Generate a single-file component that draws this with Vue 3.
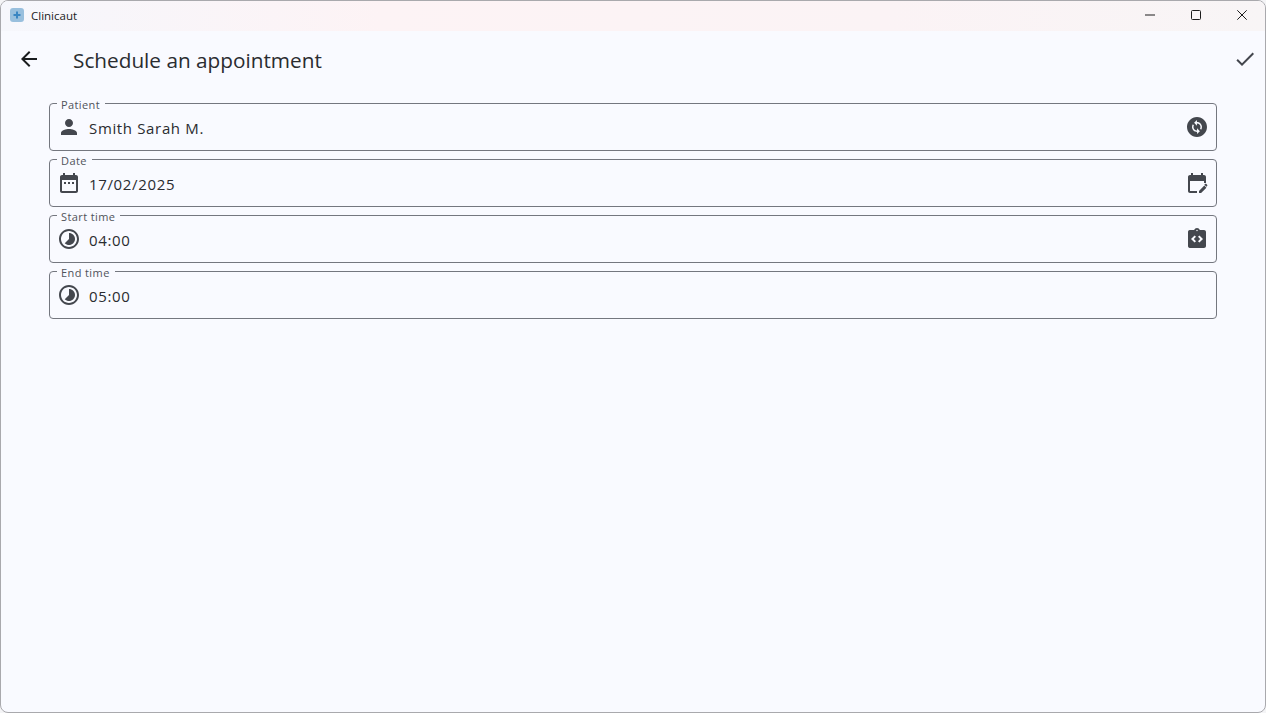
<script setup>
const icons = {
  person: "M12 12c2.21 0 4-1.79 4-4s-1.79-4-4-4-4 1.79-4 4 1.79 4 4 4zm0 2c-2.67 0-8 1.34-8 4v2h16v-2c0-2.66-5.33-4-8-4z",
  calendar: "M9 11H7v2h2v-2zm4 0h-2v2h2v-2zm4 0h-2v2h2v-2zm2-7h-1V2h-2v2H8V2H6v2H5c-1.11 0-1.99.9-1.99 2L3 20c0 1.1.89 2 2 2h14c1.1 0 2-.9 2-2V6c0-1.1-.9-2-2-2zm0 16H5V9h14v11z",
  timelapse: "M16.24 7.76C15.07 6.59 13.54 6 12 6v6l-4.24 4.24c2.34 2.34 6.14 2.34 8.49 0 2.34-2.34 2.34-6.14-.01-8.48zM12 2C6.48 2 2 6.48 2 12s4.48 10 10 10 10-4.48 10-10S17.52 2 12 2zm0 18c-4.42 0-8-3.58-8-8s3.58-8 8-8 8 3.58 8 8-3.58 8-8 8z",
  change: "M12 2C6.48 2 2 6.48 2 12s4.48 10 10 10 10-4.48 10-10S17.52 2 12 2zm.06 17v-2.01H12c-1.28 0-2.56-.49-3.54-1.46-1.71-1.71-1.92-4.35-.64-6.29l1.1 1.1c-.71 1.33-.53 3.01.59 4.13.7.7 1.62 1.03 2.54 1.01v-2.14l2.83 2.83L12.06 19zm4.11-4.24l-1.1-1.1c.71-1.33.53-3.01-.59-4.13C13.79 8.84 12.9 8.5 12 8.5h-.06v2.15L9.11 7.83 11.94 5v2.02c1.3-.02 2.61.45 3.6 1.45 1.7 1.7 1.91 4.34.63 6.29z",
  editCalendar: "M5 10h14v2h2V6c0-1.1-.9-2-2-2h-1V2h-2v2H8V2H6v2H5c-1.11 0-1.99.9-1.99 2L3 20c0 1.1.89 2 2 2h7v-2H5V10zm17.13 3.71-.71-.71c-.39-.39-1.02-.39-1.41 0l-.71.71 2.12 2.12.71-.71c.39-.39.39-1.02 0-1.41zM14 19.88V22h2.12l5.3-5.3-2.12-2.12-5.3 5.3z",
  code: "M19 3h-4.18C14.4 1.84 13.3 1 12 1s-2.4.84-2.82 2H5c-.14 0-.27.01-.4.04-.39.08-.74.28-1.01.55-.18.18-.33.4-.43.64S3 4.72 3 5v14c0 .27.06.54.16.78s.25.45.43.64c.27.27.62.47 1.01.55.13.02.26.03.4.03h14c1.1 0 2-.9 2-2V5c0-1.1-.9-2-2-2zm-8 11.17-1.41 1.42L6 12l3.59-3.59L11 9.83 8.83 12 11 14.17zm1-9.92c-.41 0-.75-.34-.75-.75s.34-.75.75-.75.75.34.75.75-.34.75-.75.75zm2.41 11.34L13 14.17 15.17 12 13 9.83l1.41-1.42L18 12l-3.59 3.59z",
  back: "M20 11H7.83l5.59-5.59L12 4l-8 8 8 8 1.41-1.41L7.83 13H20v-2z",
  check: "M9 16.17L4.83 12l-1.42 1.41L9 19 21 7l-1.41-1.41z",
}

const fields = [
  { label: "Patient", value: "Smith Sarah M.", icon: icons.person, action: icons.change },
  { label: "Date", value: "17/02/2025", icon: icons.calendar, action: icons.editCalendar },
  { label: "Start time", value: "04:00", icon: icons.timelapse, action: icons.code },
  { label: "End time", value: "05:00", icon: icons.timelapse },
]
</script>

<template>
  <div class="window">
    <header class="titlebar">
      <svg class="logo" width="14" height="14" viewBox="0 0 14 14">
        <rect width="14" height="14" rx="3" fill="#98bfdd" />
        <path d="M6 3.5h2V6h2.5v2H8v2.5H6V8H3.5V6H6z" fill="#3a86c2" />
      </svg>
      <span class="app-name">Clinicaut</span>
      <div class="controls">
        <button class="control">
          <svg width="10" height="10" viewBox="0 0 10 10"><path d="M0 5h10" stroke="#1c1c1c" /></svg>
        </button>
        <button class="control">
          <svg width="10" height="10" viewBox="0 0 10 10"><rect x=".5" y=".5" width="9" height="9" rx="1" fill="none" stroke="#1c1c1c" /></svg>
        </button>
        <button class="control">
          <svg width="10" height="10" viewBox="0 0 10 10"><path d="M.3.3l9.4 9.4M9.7.3L.3 9.7" stroke="#1c1c1c" /></svg>
        </button>
      </div>
    </header>

    <div class="appbar">
      <svg class="back" width="24" height="24" viewBox="0 0 24 24"><path :d="icons.back" /></svg>
      <h1 class="title">Schedule an appointment</h1>
      <svg class="confirm" width="24" height="24" viewBox="0 0 24 24"><path :d="icons.check" /></svg>
    </div>

    <main class="form">
      <div class="field" v-for="field in fields" :key="field.label">
        <span class="label">{{ field.label }}</span>
        <svg class="icon" width="24" height="24" viewBox="0 0 24 24"><path :d="field.icon" /></svg>
        <span class="value">{{ field.value }}</span>
        <svg v-if="field.action" class="icon" width="24" height="24" viewBox="0 0 24 24"><path :d="field.action" /></svg>
      </div>
    </main>
  </div>
</template>

<style scoped>
.window {
  box-sizing: border-box;
  height: 713px;
  overflow: hidden;
  background: #f9faff;
  border: 1px solid #a9a9ad;
  border-radius: 8px;
  font-family: "Open Sans", sans-serif;
  color: #1a1c1e;
}

.titlebar {
  display: flex;
  align-items: center;
  height: 28px;
  padding: 0 0 2px 9px;
  background: linear-gradient(90deg, #f6f7fc 0%, #fdf3f5 30%, #fbf3f5 70%, #f8f5f6 100%);
}

.logo {
  flex: none;
}

.app-name {
  margin-left: 7px;
  font-size: 11.5px;
  color: #1c1c1c;
}

.controls {
  display: flex;
  margin-left: auto;
}

.control {
  display: flex;
  align-items: center;
  justify-content: center;
  width: 46px;
  height: 28px;
  padding: 0;
  border: none;
  background: transparent;
}

.appbar {
  display: flex;
  align-items: center;
  height: 58px;
  padding: 0 8px 0 16px;
}

.back {
  flex: none;
  margin-bottom: 2px;
  fill: #1a1c1e;
}

.title {
  margin: 0 0 0 32px;
  font-size: 20.75px;
  font-weight: 400;
  line-height: 28px;
  color: #2a2c30;
}

.confirm {
  flex: none;
  margin-left: auto;
  margin-bottom: 2px;
  fill: #44474e;
}

.form {
  display: flex;
  flex-direction: column;
  gap: 8px;
  margin: 14px 48px 0;
}

.field {
  position: relative;
  box-sizing: border-box;
  display: flex;
  align-items: center;
  height: 48px;
  padding: 0 7px;
  border: 1px solid #74777f;
  border-radius: 4px;
}

.label {
  position: absolute;
  top: -7px;
  left: 7px;
  padding: 0 5px 0 4px;
  background: #f9faff;
  font-size: 11px;
  line-height: 16px;
  letter-spacing: 0.4px;
  color: #50535a;
}

.icon {
  flex: none;
  fill: #44474e;
}

.value {
  flex: 1;
  margin-left: 8px;
  padding-top: 2px;
  font-size: 15px;
  line-height: 24px;
  letter-spacing: 0.65px;
  color: #2a2c30;
}
</style>

<style>
html,
body {
  margin: 0;
  background: #f4f4f6;
}
</style>
